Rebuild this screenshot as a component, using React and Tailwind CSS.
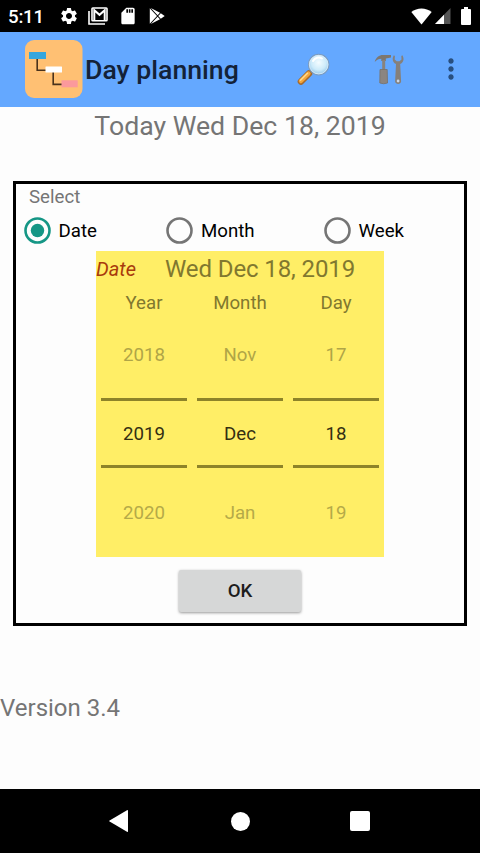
import React, { useState } from 'react';
import { MdSettings, MdSdCard, MdMoreVert } from 'react-icons/md';

const modes = [
  { name: 'Date', width: 'w-[142.5px]' },
  { name: 'Month', width: 'w-[157.5px]' },
  { name: 'Week', width: 'w-[110px]' },
];

const wheels = [
  { label: 'Year', values: ['2018', '2019', '2020'] },
  { label: 'Month', values: ['Nov', 'Dec', 'Jan'] },
  { label: 'Day', values: ['17', '18', '19'] },
];

const StatusBar = () => (
  <div className="flex h-8 items-center bg-black text-white">
    <span className="mt-px ml-2 w-[51px] text-[18.67px] leading-8 font-medium tracking-[-0.2px]">5:11</span>
    <MdSettings className="h-5 w-5" />
    <svg className="ml-[9px] h-[18px] w-5" viewBox="0 0 20 18" fill="none" stroke="currentColor">
      <path d="M1 4v13h16" strokeWidth="1.6" />
      <rect x="4" y="1" width="15" height="12.7" rx="0.8" strokeWidth="1.6" />
      <path d="M6.3 13V3.2l5.2 4.6 5.2-4.6V13" strokeWidth="2" />
    </svg>
    <MdSdCard className="ml-[9.5px] h-5 w-5" />
    <svg className="ml-[11px] h-4 w-4" viewBox="0 0 16 16" fill="currentColor">
      <path d="M.8.3.8 15.7 8 8zM1.8.1 8.6 7.3 11 4.8zM1.8 15.9 8.6 8.7 11 11.2zM11.8 5.3 9.2 8l2.6 2.7L15.7 8z" />
    </svg>
    <svg className="ml-auto h-[17px] w-[21px]" viewBox="0 0 21 17" fill="currentColor">
      <path d="M10.5 16.5.3 4C6 -.8 15 -.8 20.7 4z" />
    </svg>
    <svg className="ml-[3px] h-4 w-4" viewBox="0 0 16 16">
      <path d="M15.5 0v16H0z" fill="#555" />
      <path d="M9 6.7V16H0z" fill="#fff" />
    </svg>
    <svg className="mr-[9px] ml-[10px] h-[18px] w-[10px]" viewBox="0 0 10 18" fill="currentColor">
      <path d="M3 0h4v2h2a1 1 0 0 1 1 1v14a1 1 0 0 1-1 1H1a1 1 0 0 1-1-1V3a1 1 0 0 1 1-1h2z" />
    </svg>
  </div>
);

const Logo = () => (
  <svg className="ml-[24.5px] h-[58px] w-[58px]" viewBox="0 0 58 58">
    <rect width="57.5" height="58" rx="9" fill="#ffc073" />
    <path d="M12.2 16v14.3H22M28.2 32v12.4H38" fill="none" stroke="#4a321c" strokeWidth="1.6" />
    <rect x="4" y="12" width="17" height="7" fill="#35a6de" />
    <rect x="20.5" y="26.5" width="16.5" height="6" rx="0.5" fill="#fff" />
    <rect x="36.5" y="40.3" width="16.2" height="7" fill="#fb999c" />
  </svg>
);

const SearchIcon = () => (
  <svg className="h-[36px] w-[34px]" viewBox="0 0 34 36">
    <defs>
      <radialGradient id="lens" cx="50%" cy="40%" r="60%">
        <stop offset="0" stopColor="#f4fcff" />
        <stop offset="0.6" stopColor="#cdebfa" />
        <stop offset="1" stopColor="#8fc4e8" />
      </radialGradient>
    </defs>
    <path d="m16 19-4 4" stroke="#7b90a8" strokeWidth="3" />
    <path d="m13 21.5-8 8" stroke="#a66a2c" strokeWidth="6.6" strokeLinecap="round" />
    <path d="m12.5 21.5-7.6 7.6" stroke="#f4a63c" strokeWidth="4.3" strokeLinecap="round" />
    <path d="m11.5 21.3-7 7" stroke="#ffd98b" strokeWidth="1.6" strokeLinecap="round" />
    <circle cx="22.7" cy="12.6" r="10.2" fill="url(#lens)" stroke="#7c9cc0" strokeWidth="1.2" />
    <circle cx="22.7" cy="12.6" r="9.3" fill="none" stroke="#d9eaf5" strokeWidth="0.9" />
    <path d="M17 9c2-3.5 6-4.5 9-2.5" fill="none" stroke="#fff" strokeWidth="2" strokeLinecap="round" />
  </svg>
);

const ToolsIcon = () => (
  <svg className="h-[31px] w-[30px]" viewBox="0 0 30 31">
    <path d="M.7 8C2 3.3 5 1 9 1h8v2.6l-5.2 1V7H7.3V4.7C4.6 4.7 3 5.8.7 8z" fill="#7d7770" />
    <path d="M8.2 6h3v10h-3z" fill="#89837d" />
    <path d="M6 15.5h7.2l.3 13.5q-3.8 1.5-7.7 0z" fill="#8b8580" stroke="#77716a" strokeWidth="0.8" />
    <path
      d="M19.8 1.2c-2.2 3.6-1.1 7.3 2.2 8.8l-.9 17.5c.2 3.3 5.8 3.3 6 0l-.9-17.5c3.3-1.5 4.4-5.2 2.2-8.8l-1.1.8.2 3.6-2 1.6h-2.8l-2-1.6.2-3.6z"
      fill="#85807b"
    />
    <circle cx="24.1" cy="27" r="1.4" fill="#c9d6e8" />
  </svg>
);

const AppBar = () => (
  <div className="flex h-[74.67px] items-center bg-[#64a8ff]">
    <Logo />
    <h1 className="mt-[2px] ml-[2.5px] w-[211px] text-[26.67px] leading-8 font-medium text-[#132238]">Day planning</h1>
    <button className="mt-[2px]"><SearchIcon /></button>
    <button className="ml-[44px]"><ToolsIcon /></button>
    <button className="ml-[30.5px]"><MdMoreVert className="h-8 w-8 text-[#284f7f]" /></button>
  </div>
);

const Radio = ({ name, width, checked, onSelect }) => (
  <button className={`flex h-8 items-center ${width}`} onClick={onSelect}>
    <svg className="h-[27px] w-[27px]" viewBox="0 0 27 27">
      <circle cx="13.5" cy="13.5" r="12" fill="none" strokeWidth="2.6" stroke={checked ? '#159685' : '#757575'} />
      {checked && <circle cx="13.5" cy="13.5" r="6.7" fill="#159685" />}
    </svg>
    <span className="ml-2 text-[18.67px] text-black">{name}</span>
  </button>
);

const Wheel = ({ label, values }) => (
  <div className="flex w-24 flex-col items-center text-[18.67px] text-[#342f12]">
    <div className="h-8 leading-8 text-[#81782f]">{label}</div>
    <div className="mt-[10px] h-[52px] leading-[52px] text-[#b0a547]">{values[0]}</div>
    <div className="mt-[17px] h-[70px] w-[86px] border-y-3 border-[#8d8329] text-center leading-[66px]">{values[1]}</div>
    <div className="mt-[18px] h-[54px] leading-[54px] text-[#b5aa48]">{values[2]}</div>
  </div>
);

const App = () => {
  const [mode, setMode] = useState('Date');

  return (
    <div className="flex h-[853px] w-[480px] flex-col overflow-hidden bg-[#fdfdfd] font-['Roboto',sans-serif] text-[#757575]">
      <StatusBar />
      <AppBar />
      <div className="flex flex-1 flex-col">
        <div className="h-[38px] text-center text-[26.67px] leading-[38px]">Today Wed Dec 18, 2019</div>

        <div className="mx-[13px] mt-9 flex h-[445px] flex-col border-[3px] border-black">
          <div className="ml-[13px] h-[26px] text-[18.67px] leading-[26px]">Select</div>
          <div className="ml-[7.5px] mt-[5px] flex h-8">
            {modes.map((item) => (
              <Radio key={item.name} {...item} checked={mode === item.name} onSelect={() => setMode(item.name)} />
            ))}
          </div>

          <div className="mx-auto mt-[4px] h-[306px] w-72 bg-[#ffee66]">
            <div className="flex h-9 items-center text-[#81782f]">
              <span className="w-[69px] text-xl text-[#a83a0c] italic">Date</span>
              <span className="text-2xl tracking-[-0.1px]">Wed Dec 18, 2019</span>
            </div>
            <div className="flex">
              {wheels.map((wheel) => (
                <Wheel key={wheel.label} {...wheel} />
              ))}
            </div>
          </div>

          <button className="mx-auto mt-[13px] h-[42px] w-[122px] rounded-xs bg-[#d6d7d7] text-[18.67px] font-medium text-[#1d1d1d] shadow-[0_1px_3px_rgba(0,0,0,0.4)]">
            OK
          </button>
        </div>

        <div className="mt-[66px] text-2xl">Version 3.4</div>
      </div>

      <div className="flex h-16 items-center bg-black text-white">
        <svg className="ml-[109px] h-[22px] w-[19px]" viewBox="0 0 19 22" fill="currentColor">
          <path d="M18 .2q1-.5 1 .5v20.6q0 1-1 .5L.6 11.6q-.9-.6 0-1.2z" />
        </svg>
        <div className="ml-[102.5px] h-[19px] w-[19px] rounded-full bg-white" />
        <div className="ml-[100.5px] h-5 w-5 rounded-[2px] bg-white" />
      </div>
    </div>
  );
};

export default App;
